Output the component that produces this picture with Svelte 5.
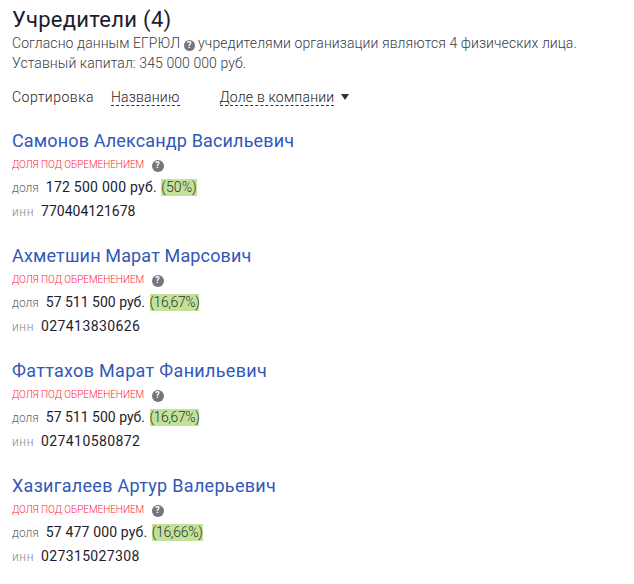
<script>
  const founders = [
    { name: "Самонов Александр Васильевич", nameTrack: 0.15, sum: "172 500 000 руб.", sumTrack: 0.25, pct: "(50%)", pctTrack: 0.1, inn: "770404121678", innTrack: 0 },
    { name: "Ахметшин Марат Марсович", nameTrack: 0.15, sum: "57 511 500 руб.", sumTrack: 0, pct: "(16,67%)", pctTrack: -0.4, inn: "027413830626", innTrack: 0.4 },
    { name: "Фаттахов Марат Фанильевич", nameTrack: 0.31, sum: "57 511 500 руб.", sumTrack: 0, pct: "(16,67%)", pctTrack: -0.4, inn: "027410580872", innTrack: 0.4 },
    { name: "Хазигалеев Артур Валерьевич", nameTrack: 0.3, sum: "57 477 000 руб.", sumTrack: 0.15, pct: "(16,66%)", pctTrack: -0.3, inn: "027315027308", innTrack: 0.35 }
  ];
</script>

<div class="page">
  <h1>Учредители (4)</h1>
  <p class="intro">
    Согласно данным ЕГРЮЛ <span class="hint">?</span> учредителями организации являются 4 физических лица.<br />
    Уставный капитал: 345 000 000 руб.
  </p>

  <div class="sort">
    <span class="sort-label">Сортировка</span>
    <span class="sort-link first">Названию</span>
    <span class="sort-link">Доле в компании</span>
    <span class="arrow"></span>
  </div>

  {#each founders as f}
    <div class="founder">
      <div class="name" style="letter-spacing: {f.nameTrack}px">{f.name}</div>
      <div class="warn">доля под обременением <span class="hint big">?</span></div>
      <div class="row share">
        <span class="key">доля</span><span class="sum" style="letter-spacing: {f.sumTrack}px">{f.sum}</span>
        <span class="pct" style="letter-spacing: {f.pctTrack}px">{f.pct}</span>
      </div>
      <div class="row inn-row"><span class="key inn">инн</span><span class="inn-val" style="letter-spacing: {f.innTrack}px">{f.inn}</span></div>
    </div>
  {/each}
</div>

<style>
  :global(body) {
    background: #fff;
  }

  .page {
    padding: 8px 12px 0;
    font-family: Roboto, "Liberation Sans", sans-serif;
    color: #1c1c2e;
  }

  h1 {
    margin: 0;
    font-size: 22px;
    line-height: 24px;
    font-weight: 400;
    letter-spacing: 0.3px;
  }

  .intro {
    margin: 1px 0 0;
    font-size: 14px;
    line-height: 20px;
    font-weight: 300;
    color: #3a3a44;
    letter-spacing: 0.08px;
  }

  .hint {
    display: inline-flex;
    align-items: center;
    justify-content: center;
    width: 11px;
    height: 11px;
    border-radius: 50%;
    background: #75757f;
    color: #fff;
    font-size: 9px;
    line-height: 11px;
    font-weight: 700;
    letter-spacing: 0;
  }

  .hint.big {
    width: 12px;
    height: 12px;
    margin-left: 5px;
  }

  .sort {
    display: flex;
    align-items: center;
    margin-top: 14px;
    font-size: 14px;
    line-height: 20px;
    font-weight: 300;
    color: #222;
    letter-spacing: 0.2px;
  }

  .sort-label {
    margin-right: 17px;
    letter-spacing: 0.5px;
  }

  .sort-link {
    border-bottom: 1px dashed #333;
    line-height: 16px;
  }

  .sort-link.first {
    margin-right: 40px;
  }

  .arrow {
    margin-left: 7px;
    border-left: 4px solid transparent;
    border-right: 4px solid transparent;
    border-top: 6px solid #333;
  }

  .founder {
    margin-top: 22px;
    height: 95px;
  }

  .founder + .founder {
    margin-top: 20px;
  }

  .name {
    font-size: 18px;
    line-height: 24px;
    color: #3158b8;
  }

  .warn {
    margin-top: 4px;
    font-size: 10px;
    line-height: 16px;
    text-transform: uppercase;
    color: #ff2238;
    font-weight: 300;
    letter-spacing: -0.05px;
  }

  .row {
    font-size: 14px;
    line-height: 20px;
    margin-top: 4px;
  }

  .inn-row {
    margin-top: 3px;
  }

  .key {
    font-size: 12px;
    font-weight: 300;
    color: #666;
    margin-right: 7px;
  }

  .key.inn {
    color: #888;
    letter-spacing: 0.6px;
  }

  .sum, .inn-val {
    color: #1c1c2e;
  }

  .pct {
    background: #c2e29a;
    font-weight: 300;
    color: #333;
    line-height: 17px;
    display: inline-block;
    margin-left: 1px;
  }
</style>
